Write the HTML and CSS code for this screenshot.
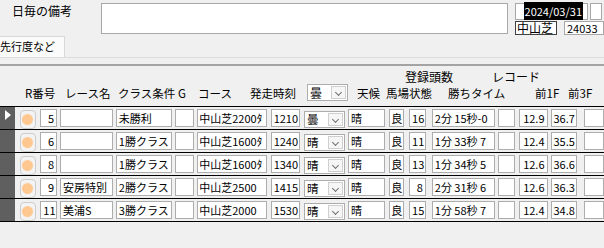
FILE: index.html
```html
<!doctype html>
<html lang="ja">
  <head>
    <meta charset="UTF-8" />
    <meta name="viewport" content="width=device-width, initial-scale=1.0" />
    <title>先行度など</title>
    <link rel="stylesheet" href="styles.css">
  </head>
  <body>
    <div class="top">
      <div class="top-label">日毎の備考</div>
      <div class="remarks"></div>
      <div class="top-right">
        <div class="top-line">
          <div class="date-box"><span class="selected">2024/03/31</span></div>
          <div class="cut-box"></div>
        </div>
        <div class="top-line">
          <div class="venue-box">中山芝</div>
          <div class="code-box">24033</div>
        </div>
      </div>
    </div>

    <div class="tabs">
      <div class="tab">先行度など</div>
    </div>

    <div class="form-head">
      <div class="head-1">
        <span class="h-count">登録頭数</span>
        <span>レコード</span>
      </div>
      <div class="head-2">
        <span>R番号</span>
        <span>レース名</span>
        <span>クラス条件</span>
        <span>G</span>
        <span>コース</span>
        <span>発走時刻</span>
        <span><span class="combo head-combo"><span class="combo-text">曇</span><span class="drop"></span></span></span>
        <span>天候</span>
        <span>馬場状態</span>
        <span>勝ちタイム</span>
        <span>前1F</span>
        <span>前3F</span>
      </div>
    </div>

    <div class="rows" id="rows"></div>

    <script>
      const races = [
        { no: 5, name: "", cls: "未勝利", course: "中山芝2200ﾀ", time: "1210", sky: "曇", wx: "晴", baba: "良", count: 16, win: "2分 15秒-0", f1: "12.9", f3: "36.7" },
        { no: 6, name: "", cls: "1勝クラス", course: "中山芝1600ﾀ", time: "1240", sky: "晴", wx: "晴", baba: "良", count: 11, win: "1分 33秒 7", f1: "12.4", f3: "35.5" },
        { no: 8, name: "", cls: "1勝クラス", course: "中山芝1600ﾀ", time: "1340", sky: "晴", wx: "晴", baba: "良", count: 13, win: "1分 34秒 5", f1: "12.6", f3: "36.6" },
        { no: 9, name: "安房特別", cls: "2勝クラス", course: "中山芝2500", time: "1415", sky: "晴", wx: "晴", baba: "良", count: 8, win: "2分 31秒 6", f1: "12.6", f3: "36.3" },
        { no: 11, name: "美浦S", cls: "3勝クラス", course: "中山芝2000", time: "1530", sky: "晴", wx: "晴", baba: "良", count: 15, win: "1分 58秒 7", f1: "12.4", f3: "34.8" },
      ];

      const rowsEl = document.getElementById("rows");

      races.forEach((race, i) => {
        const row = document.createElement("div");
        row.className = "row";
        row.innerHTML = `
          <div class="sel">${i === 0 ? '<span class="current"></span>' : ""}</div>
          <div class="btn"><span class="dot"></span></div>
          <div class="box c-num r">${race.no}</div>
          <div class="box c-name">${race.name}</div>
          <div class="box c-class">${race.cls}</div>
          <div class="box c-g"></div>
          <div class="box c-course">${race.course}</div>
          <div class="box c-time r">${race.time}</div>
          <div class="combo c-sky"><span class="combo-text">${race.sky}</span><span class="drop"></span></div>
          <div class="box c-wx">${race.wx}</div>
          <div class="box c-baba">${race.baba}</div>
          <div class="box c-count r">${race.count}</div>
          <div class="box c-win">${race.win}</div>
          <div class="box c-empty"></div>
          <div class="box c-f1 r">${race.f1}</div>
          <div class="box c-f3 r">${race.f3}</div>
          <div class="box c-extra"></div>
        `;
        rowsEl.appendChild(row);
      });
    </script>
  </body>
</html>
```

FILE: styles.css
```css
body {
  margin: 0;
  width: 604px;
  height: 248px;
  overflow: hidden;
  background-color: #f0f0f0;
  font-family: "Noto Sans CJK JP", "Noto Sans", sans-serif;
  font-size: 12px;
  color: #000;
}

/* top strip */
.top {
  display: flex;
  align-items: flex-start;
  height: 36px;
  padding-top: 3px;
  box-sizing: border-box;
}

.top-label {
  width: 91px;
  margin-left: 12px;
  line-height: 14px;
  padding-top: 1px;
}

.remarks {
  width: 416px;
  height: 31px;
  box-sizing: border-box;
  background-color: #fff;
  border: 1px solid #a8a8a8;
}

.top-right {
  margin-left: 7px;
  display: flex;
  flex-direction: column;
  gap: 1px;
}

.top-line {
  display: flex;
  gap: 2px;
}

.date-box {
  width: 73px;
  height: 17px;
  box-sizing: border-box;
  background-color: #fff;
  border: 1px solid #a8a8a8;
  text-align: right;
  padding-right: 4px;
  line-height: 14px;
  font-size: 11px;
}

.selected {
  background-color: #000;
  color: #fff;
  padding: 1px 1px;
}

.cut-box {
  width: 12px;
  height: 17px;
  box-sizing: border-box;
  border: 1px solid #a8a8a8;
  background-color: #fff;
}

.venue-box {
  width: 42px;
  height: 14px;
  box-sizing: border-box;
  border: 1px solid #404040;
  background-color: #fff;
  line-height: 12px;
  padding-left: 1px;
}

.code-box {
  width: 40px;
  height: 14px;
  margin-left: 5px;
  box-sizing: border-box;
  border: 1px solid #a8a8a8;
  background-color: #fff;
  line-height: 12px;
  padding-left: 2px;
  font-size: 11px;
}

/* tab */
.tabs {
  height: 22px;
  box-sizing: border-box;
  border-bottom: 1px solid #dcdcdc;
}

.tab {
  width: 65px;
  height: 21px;
  box-sizing: border-box;
  background-color: #fbfbfb;
  border-top: 1px solid #d9d9d9;
  border-right: 1px solid #d9d9d9;
  line-height: 19px;
  font-size: 11px;
}

/* column headers */
.form-head {
  margin-top: 6px;
  border-top: 2px solid #a4a4a4;
  height: 40px;
}

.head-1 {
  display: flex;
  padding-top: 4px;
  padding-left: 405px;
  line-height: 14px;
}

.h-count {
  width: 87px;
}

.head-2 {
  display: grid;
  grid-template-columns: 40px 53px 60px 20px 52px 57px 50px 29px 62px 87px 33px auto;
  padding-left: 25px;
  line-height: 16px;
  font-size: 11.5px;
}

.head-2 > span {
  margin-top: 1px;
  white-space: nowrap;
}

.head-combo {
  display: flex;
  width: 41px;
  margin-top: -1px;
  font-size: 12px;
}

/* rows */
.row {
  display: flex;
  height: 23px;
  box-sizing: border-box;
  border-top: 1px solid #000;
}

.row:last-child {
  height: 24px;
  border-bottom: 1px solid #000;
}

.sel {
  width: 15px;
  background-color: #5f5f5f;
  position: relative;
}

.current {
  position: absolute;
  left: 5px;
  top: 3px;
  width: 0;
  height: 0;
  border-top: 5px solid transparent;
  border-bottom: 5px solid transparent;
  border-left: 6px solid #fff;
}

.btn {
  width: 17px;
  height: 19px;
  margin: 3px 0 0 5px;
  box-sizing: border-box;
  border: 1px solid #cdcdcd;
  border-radius: 4px;
  background-color: #f3f3f3;
  display: flex;
  justify-content: center;
  align-items: center;
}

.dot {
  width: 11px;
  height: 11px;
  border-radius: 50%;
  background-color: #ffc890;
}

.box {
  height: 18px;
  margin-top: 2px;
  box-sizing: border-box;
  background-color: #fff;
  border: 1px solid #adadad;
  line-height: 16px;
  padding: 0 2px;
  font-size: 11px;
  white-space: nowrap;
  overflow: hidden;
}

.r {
  text-align: right;
}

.combo {
  display: flex;
  height: 17px;
  box-sizing: border-box;
  background-color: #fff;
  border: 1px solid #adadad;
  line-height: 15px;
}

.combo-text {
  flex: 1;
  padding-left: 2px;
}

.drop {
  width: 15px;
  margin: 1px;
  box-sizing: border-box;
  border: 1px solid #cfcfcf;
  background-color: #f6f6f6;
  position: relative;
}

.drop::after {
  content: "";
  position: absolute;
  left: 4px;
  bottom: 3px;
  width: 4px;
  height: 4px;
  border-right: 1px solid #707070;
  border-bottom: 1px solid #707070;
  transform: rotate(45deg);
}

.c-sky {
  width: 42px;
  margin: 4px 0 0 4px;
  height: 17px;
  font-size: 11.5px;
}

.c-num { width: 17px; margin-left: 4px; }
.c-name { width: 54px; margin-left: 3px; }
.c-class { width: 57px; margin-left: 3px; }
.c-g { width: 20px; margin-left: 3px; }
.c-course { width: 71px; margin-left: 3px; padding: 0 1px; }
.c-time { width: 30px; margin-left: 4px; }
.c-wx { width: 38px; margin-left: 3px; }
.c-baba { width: 15px; margin-left: 4px; padding: 0 1px; }
.c-count { width: 17px; margin-left: 5px; }
.c-win { width: 65px; margin-left: 6px; }
.c-empty { width: 17px; margin-left: 3px; }
.c-f1 { width: 29px; margin-left: 4px; }
.c-f3 { width: 27px; margin-left: 3px; }
.c-extra { width: 20px; margin-left: 7px; flex-shrink: 0; }
```
